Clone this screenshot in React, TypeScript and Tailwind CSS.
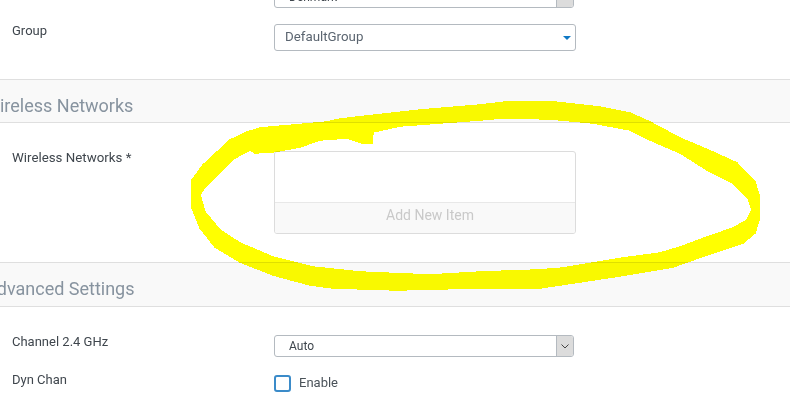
import React from "react";

const scribble =
  "M192 180 L203 165 L230 140 L247 132 L260 128 L327 122 L340 119 L420 110 L480 105 L505 102 L555 102 L600 107 L630 113 L650 122 L680 138 L713 152 L737 163 L755 182 L759 195 L759 220 L755 233 L743 243 L707 255 L687 262 L673 267 L613 277 L560 285 L540 288 L480 288 L397 290 L333 288 L310 285 L273 275 L240 262 L215 247 L200 228 L192 208 Z " +
  "M200 195 L205 212 L220 230 L240 243 L273 257 L313 267 L360 272 L430 275 L480 272 L537 270 L563 268 L623 258 L660 253 L680 247 L707 237 L733 228 L747 220 L752 210 L748 198 L733 183 L707 170 L680 153 L650 140 L630 130 L593 123 L550 119 L503 118 L480 120 L400 126 L373 132 L372 143 L362 143 L347 138 L320 140 L300 147 L273 152 L255 153 L250 150 L235 158 L220 172 L205 187 Z";

const Label = ({ children }: { children: React.ReactNode }) => (
  <div className="-mt-px w-[274px] shrink-0 pl-3 text-[13px] leading-4 text-[#3f464d]">{children}</div>
);

const NativeSelect = ({ value }: { value: string }) => (
  <div className="flex h-[22px] w-[300px] items-stretch overflow-hidden rounded-[3px] border border-[#b4bac0] bg-white">
    <span className="flex-1 pl-[14px] text-[12px] leading-5 text-[#3f464d]">{value}</span>
    <span className="flex w-[17px] items-center justify-center border-l border-[#b4bac0] bg-[#dcdcdc]">
      <svg width="8" height="5" viewBox="0 0 8 5" fill="none" stroke="#444" strokeWidth="1">
        <path d="M0.5 0.5 L4 4 L7.5 0.5" />
      </svg>
    </span>
  </div>
);

const SectionHeader = ({ title, className }: { title: string; className: string }) => (
  <div className={`${className} border-y border-[#dfdfdf] bg-[#f9f9f9] text-[18px] leading-[52px] text-[#87939f]`}>
    <h2 className="whitespace-nowrap">{title}</h2>
  </div>
);

export default function App() {
  return (
    <div className="relative h-[406px] w-[790px] overflow-hidden bg-white font-['Roboto',sans-serif]">
      {/* country select, scrolled mostly out of view */}
      <div className="ml-[274px] -mt-[14px]">
        <NativeSelect value="Denmark" />
      </div>

      <div className="mt-4 flex">
        <Label>Group</Label>
        <div className="flex h-[27px] w-[302px] items-center justify-between rounded-[3px] border border-[#b4bac0] bg-white pl-[10px] pr-[4px]">
          <span className="pb-[2px] text-[13.3px] text-[#5b6570]">DefaultGroup</span>
          <span className="h-0 w-0 border-x-[4px] border-t-[4px] border-x-transparent border-t-[#0f78c4]" />
        </div>
      </div>

      <div className="mt-[28px]">
        <SectionHeader title="Wireless Networks" className="-ml-[16px] h-[44px] w-[806px]" />
      </div>

      <div className="mt-[28px] flex">
        <Label>
          <span className="text-[13.3px]">Wireless Networks *</span>
        </Label>
        <div className="h-[83px] w-[302px] overflow-hidden rounded-[3px] border border-[#dcdcdc]">
          <div className="h-[51px] border-b border-[#e8e8e8]" />
          <div className="h-[30px] bg-[#f9f9f9] pl-[10px] text-center text-[14px] leading-[24px] text-[#c9c9c9]">
            Add New Item
          </div>
        </div>
      </div>

      <div className="mt-[28px]">
        <SectionHeader title="Advanced Settings" className="-ml-[15px] h-[45px] w-[805px]" />
      </div>

      <div className="mt-[28px] flex">
        <Label>Channel 2.4 GHz</Label>
        <NativeSelect value="Auto" />
      </div>

      <div className="mt-[16px] flex">
        <Label>Dyn Chan</Label>
        <label className="flex items-center gap-[8px]">
          <span className="h-[17px] w-[17px] rounded-[3px] border-2 border-[#3b8bc9] bg-white" />
          <span className="pb-[2px] text-[13px] text-[#4a5259]">Enable</span>
        </label>
      </div>

      {/* hand drawn yellow highlight on top of the form */}
      <svg
        className="pointer-events-none absolute left-0 top-0 mix-blend-multiply"
        width="790"
        height="406"
        viewBox="0 0 790 406"
        shapeRendering="crispEdges"
      >
        <path d={scribble} fill="#ffff00" stroke="#ffff00" strokeWidth="1.5" fillRule="evenodd" />
      </svg>
    </div>
  );
}
